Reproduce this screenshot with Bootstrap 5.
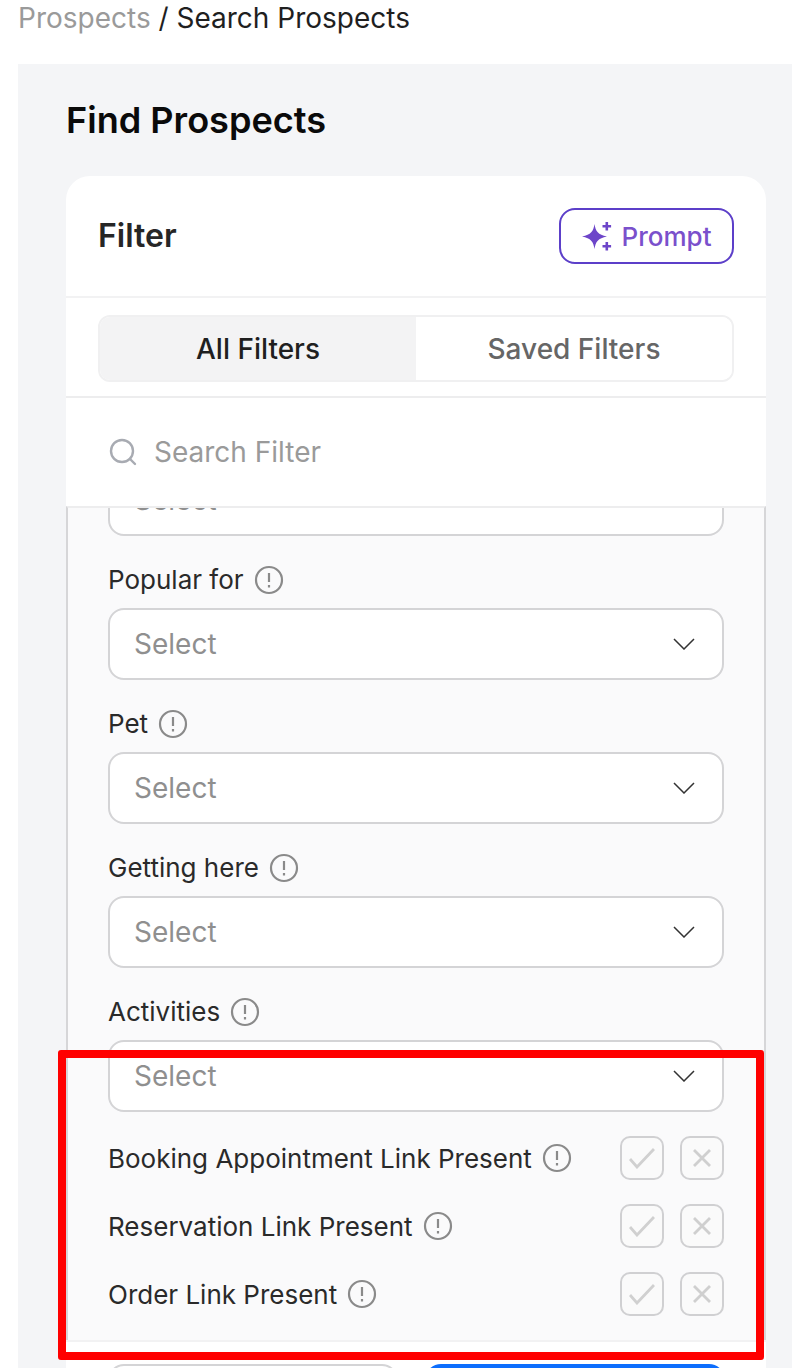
<!DOCTYPE html>
<html lang="en">
<head>
<meta charset="utf-8">
<title>Find Prospects</title>
<link href="https://cdn.jsdelivr.net/npm/bootstrap@5.3.0/dist/css/bootstrap.min.css" rel="stylesheet">
<style>
html,body{height:1368px;overflow:hidden;background:#fff;}
body{font-family:Inter,"Liberation Sans",sans-serif;color:#1f1f1f;position:relative;}
.crumb-bar{height:64px;padding:0 0 0 18px;font-size:28px;line-height:36px;color:#1f1f1f;}
.crumb-bar span{color:#9a9a9a;}
.page-area{margin-left:18px;background:#f4f5f7;height:1304px;padding:32px 26px 0 48px;}
.page-title{font-size:36.1px;font-weight:600;line-height:48px;color:#0a0a0a;margin:0 0 32px;}
.filter-card{background:#fff;border-radius:24px 24px 0 0;height:1200px;}
.filter-head{height:122px;padding:0 32px;border-bottom:2px solid #f2f2f3;}
.filter-title{font-size:32px;font-weight:600;color:#262626;margin:0;}
.prompt-btn{width:175px;height:56px;border:2px solid #5c3fc9;border-radius:16px;background:#fff;color:#7a50cc;font-size:26px;font-weight:500;padding:0;gap:10px;}
.tab-wrap{padding:17px 32px 14px;border-bottom:2px solid #ededee;}
.tab-group{height:67px;border:2px solid #f0f0f1;border-radius:12px;overflow:hidden;}
.tab-item{flex:1;font-size:28px;font-weight:500;color:#666;background:#fff;}
.tab-on{background:#f3f3f4;color:#1f1f1f;}
.search-row{height:108px;padding:0 42px;font-size:28px;color:#9a9a9a;}
.scroll-panel{height:834px;background:#fafafb;border:2px solid #d6d6d8;border-width:2px 2px 0;border-top-color:#ededee;overflow:hidden;padding:0 40px 24px;}
.field-label{font-size:26px;line-height:36px;margin-bottom:10px;color:#2a2a2a;gap:10px;}
.field-block{margin-bottom:26px;flex-shrink:0;}
.field-block.last-one{margin-bottom:24px;}
.fake-select{height:72px;background:#fff;border:2px solid #d4d4d6;border-radius:16px;padding:0 27px 0 24px;font-size:28px;color:#8f8f8f;flex-shrink:0;}
.bool-row{height:44px;margin-bottom:24px;font-size:26px;color:#2a2a2a;flex-shrink:0;}
.bool-row:last-child{margin-bottom:0;}
.bool-name{gap:10px;}
.bool-btn{width:44px;height:44px;border:2px solid #d0d0d2;border-radius:10px;background:#fafafa;}
.card-foot{height:60px;border-top:2px solid #f2f2f3;padding:22px 40px 0 42px;gap:27px;}
.foot-outline{width:290px;height:60px;background:#fff;border:2px solid #d4d4d6;border-radius:16px;flex-shrink:0;}
.foot-solid{width:300px;height:60px;background:#0d6efd;border-radius:16px;flex-shrink:0;}
.red-frame{position:absolute;left:58px;top:1050px;width:706px;height:310px;border:8px solid #ff0000;border-radius:3px;pointer-events:none;}
</style>
</head>
<body>
<div class="crumb-bar"><span>Prospects</span> / Search Prospects</div>
<main class="page-area">
  <h1 class="page-title">Find Prospects</h1>
  <section class="filter-card">
    <div class="filter-head d-flex align-items-center justify-content-between">
      <h2 class="filter-title">Filter</h2>
      <button class="prompt-btn d-flex align-items-center justify-content-center" type="button">
        <svg width="30" height="30" viewBox="0 0 30 30" fill="#6d45c9"><path d="M12.5 3C13.6 10.5 16 13.6 25 15.5 16 17.4 13.6 20.5 12.5 28 11.4 20.5 9 17.4 0 15.5 9 13.6 11.4 10.5 12.5 3z"/><path d="M23.5 1h2.6v3h3v2.6h-3v3h-2.6v-3h-3V4h3zM23.5 21h2.6v3h3v2.6h-3v3h-2.6v-3h-3V24h3z"/></svg>
        <span>Prompt</span>
      </button>
    </div>
    <div class="tab-wrap">
      <div class="tab-group d-flex">
        <div class="tab-item tab-on d-flex align-items-center justify-content-center">All Filters</div>
        <div class="tab-item d-flex align-items-center justify-content-center">Saved Filters</div>
      </div>
    </div>
    <div class="search-row d-flex align-items-center gap-3">
      <svg width="30" height="30" viewBox="0 0 30 30" fill="none" stroke="#a8abb2" stroke-width="2.4" stroke-linecap="round"><circle cx="14" cy="14" r="11"/><path d="M22 22l5 5"/></svg>
      <span>Search Filter</span>
    </div>
    <div class="scroll-panel d-flex flex-column justify-content-end">
      <div class="field-block"><div class="fake-select d-flex align-items-center justify-content-between"><span>Select</span><svg width="22" height="12" viewBox="0 0 22 12" fill="none" stroke="#333" stroke-width="1.5"><path d="M1 1l10 10L21 1"/></svg></div></div>
      <div class="field-block">
        <div class="field-label d-flex align-items-center">Popular for <svg width="30" height="30" viewBox="0 0 30 30" fill="none" stroke="#8a8a8a" stroke-width="2.2"><circle cx="15" cy="15" r="13"/><path d="M15 8v9M15 20v2.5"/></svg></div>
        <div class="fake-select d-flex align-items-center justify-content-between"><span>Select</span><svg width="22" height="12" viewBox="0 0 22 12" fill="none" stroke="#333" stroke-width="1.5"><path d="M1 1l10 10L21 1"/></svg></div>
      </div>
      <div class="field-block">
        <div class="field-label d-flex align-items-center">Pet <svg width="30" height="30" viewBox="0 0 30 30" fill="none" stroke="#8a8a8a" stroke-width="2.2"><circle cx="15" cy="15" r="13"/><path d="M15 8v9M15 20v2.5"/></svg></div>
        <div class="fake-select d-flex align-items-center justify-content-between"><span>Select</span><svg width="22" height="12" viewBox="0 0 22 12" fill="none" stroke="#333" stroke-width="1.5"><path d="M1 1l10 10L21 1"/></svg></div>
      </div>
      <div class="field-block">
        <div class="field-label d-flex align-items-center">Getting here <svg width="30" height="30" viewBox="0 0 30 30" fill="none" stroke="#8a8a8a" stroke-width="2.2"><circle cx="15" cy="15" r="13"/><path d="M15 8v9M15 20v2.5"/></svg></div>
        <div class="fake-select d-flex align-items-center justify-content-between"><span>Select</span><svg width="22" height="12" viewBox="0 0 22 12" fill="none" stroke="#333" stroke-width="1.5"><path d="M1 1l10 10L21 1"/></svg></div>
      </div>
      <div class="field-block last-one">
        <div class="field-label d-flex align-items-center">Activities <svg width="30" height="30" viewBox="0 0 30 30" fill="none" stroke="#8a8a8a" stroke-width="2.2"><circle cx="15" cy="15" r="13"/><path d="M15 8v9M15 20v2.5"/></svg></div>
        <div class="fake-select d-flex align-items-center justify-content-between"><span>Select</span><svg width="22" height="12" viewBox="0 0 22 12" fill="none" stroke="#333" stroke-width="1.5"><path d="M1 1l10 10L21 1"/></svg></div>
      </div>
      <div class="bool-row d-flex align-items-center justify-content-between">
        <div class="bool-name d-flex align-items-center">Booking Appointment Link Present <svg width="30" height="30" viewBox="0 0 30 30" fill="none" stroke="#8a8a8a" stroke-width="2.2"><circle cx="15" cy="15" r="13"/><path d="M15 8v9M15 20v2.5"/></svg></div>
        <div class="d-flex gap-3"><div class="bool-btn d-flex align-items-center justify-content-center"><svg width="26" height="22" viewBox="0 0 26 22" fill="none" stroke="#d0d0d0" stroke-width="2.8"><path d="M1 12l7 8L25 2"/></svg></div><div class="bool-btn d-flex align-items-center justify-content-center"><svg width="18" height="18" viewBox="0 0 18 18" fill="none" stroke="#cfcfcf" stroke-width="2.8"><path d="M1 1l16 16M17 1L1 17"/></svg></div></div>
      </div>
      <div class="bool-row d-flex align-items-center justify-content-between">
        <div class="bool-name d-flex align-items-center">Reservation Link Present <svg width="30" height="30" viewBox="0 0 30 30" fill="none" stroke="#8a8a8a" stroke-width="2.2"><circle cx="15" cy="15" r="13"/><path d="M15 8v9M15 20v2.5"/></svg></div>
        <div class="d-flex gap-3"><div class="bool-btn d-flex align-items-center justify-content-center"><svg width="26" height="22" viewBox="0 0 26 22" fill="none" stroke="#d0d0d0" stroke-width="2.8"><path d="M1 12l7 8L25 2"/></svg></div><div class="bool-btn d-flex align-items-center justify-content-center"><svg width="18" height="18" viewBox="0 0 18 18" fill="none" stroke="#cfcfcf" stroke-width="2.8"><path d="M1 1l16 16M17 1L1 17"/></svg></div></div>
      </div>
      <div class="bool-row d-flex align-items-center justify-content-between">
        <div class="bool-name d-flex align-items-center">Order Link Present <svg width="30" height="30" viewBox="0 0 30 30" fill="none" stroke="#8a8a8a" stroke-width="2.2"><circle cx="15" cy="15" r="13"/><path d="M15 8v9M15 20v2.5"/></svg></div>
        <div class="d-flex gap-3"><div class="bool-btn d-flex align-items-center justify-content-center"><svg width="26" height="22" viewBox="0 0 26 22" fill="none" stroke="#d0d0d0" stroke-width="2.8"><path d="M1 12l7 8L25 2"/></svg></div><div class="bool-btn d-flex align-items-center justify-content-center"><svg width="18" height="18" viewBox="0 0 18 18" fill="none" stroke="#cfcfcf" stroke-width="2.8"><path d="M1 1l16 16M17 1L1 17"/></svg></div></div>
      </div>
    </div>
    <div class="card-foot d-flex">
      <div class="foot-outline"></div>
      <div class="foot-solid"></div>
    </div>
  </section>
</main>
<div class="red-frame"></div>
<script src="https://cdn.jsdelivr.net/npm/bootstrap@5.3.0/dist/js/bootstrap.bundle.min.js"></script>
</body>
</html>
